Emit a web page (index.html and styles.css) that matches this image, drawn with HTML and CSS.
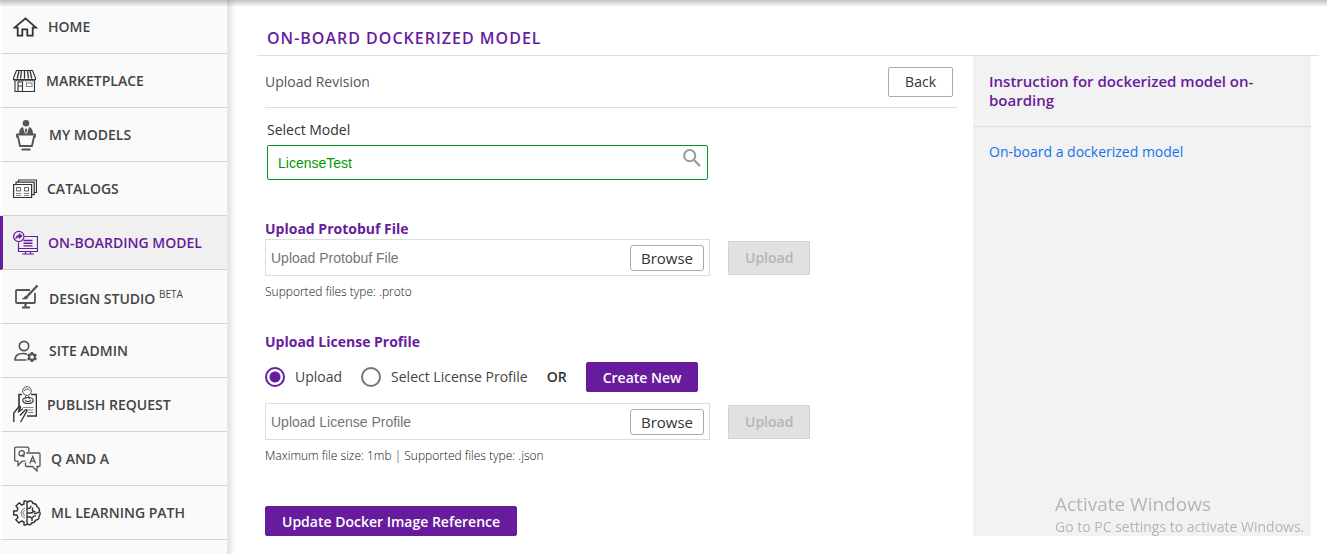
FILE: index.html
```html
<!DOCTYPE html>
<html lang="en">
<head>
<meta charset="utf-8">
<title>On-Board Dockerized Model</title>
<meta name="viewport" content="width=device-width, initial-scale=1">
<link rel="stylesheet" href="styles.css">
</head>
<body>
<div class="top-shade"></div>
<div class="layout">
  <nav class="sidebar" aria-label="Main">
    <a class="nav-item" href="#">
      <svg class="icon" width="25" height="20" viewBox="0 0 25 20" fill="none" stroke="#333" stroke-width="1.8"><path d="M1.5 10.6h3.2v8h4.600v-6.300h5v6.300h5.400v-8h3.200L12.500 1.400z"/></svg>
      <span>HOME</span>
    </a>
    <a class="nav-item" href="#">
      <svg class="icon" width="23" height="24" viewBox="0 0 23 24" fill="none" stroke="#333" stroke-width="1.1"><path d="M3.5 1.5h16l3 7.5v1.5H.5V9z"/><path d="M6 2L4.200 9.500M8.500 2L7.500 9.500M11.500 2v7.500M14.500 2l1 7.500M17 2l1.800 7.500" stroke-width="1.300"/><path d="M.6 10.500q1.800 3 3.600 0q1.800 3 3.600 0q1.800 3 3.700 0q1.800 3 3.600 0q1.800 3 3.700 0q1.800 3 3.600 0"/><path d="M2 12v10.500h19.500V12M5 22v-9h4.500v9M5 17h4.500"/><path d="M13.500 14h5.500v3.500h-5.500z" stroke="#888"/></svg>
      <span>MARKETPLACE</span>
    </a>
    <a class="nav-item" href="#">
      <svg class="icon" width="26" height="32" viewBox="0 0 26 32"><g fill="#555"><circle cx="13" cy="4.200" r="3.300"/><path d="M6 15q0-6 4-7l2 7zM20 15q0-6-4-7l-2 7zM13 9l1.300 2-1.300 4-1.300-4z"/><path d="M8.500 29.500h9v2h-9z"/></g><path d="M4 15.500h18v2.300h-1L19 27H7L5 17.800H4z" fill="none" stroke="#555" stroke-width="1.900" stroke-linejoin="round"/></svg>
      <span>MY MODELS</span>
    </a>
    <a class="nav-item" href="#">
      <svg class="icon" width="24" height="20" viewBox="0 0 24 20" fill="none" stroke="#333" stroke-width="1.200"><path d="M.6 5.500h18v13H.6zM3 5.300V3.200h18.200v12.500h-2.400M5.500 3V1h18v12.500h-2"/><path d="M3.500 8.500h4v3.500h-4zM11.500 8.500h4v3.500h-4z" stroke="#666" stroke-width="1"/><path d="M3 14.500h5M3 16.500h5M11 14.500h5M11 16.500h5" stroke="#888" stroke-width="1"/></svg>
      <span>CATALOGS</span>
    </a>
    <a class="nav-item nav-item--active" href="#" aria-current="page">
      <svg class="icon" width="25" height="26" viewBox="0 0 25 26" fill="none" stroke="#671c9d" stroke-width="1.200"><circle cx="5.800" cy="6.500" r="5.200"/><path d="M2.500 9q.3-3.500 3.500-3.800V3.500L9.500 6 6 8.500V7Q4 7.200 2.500 9z" fill="#671c9d" stroke-width=".5"/><path d="M11.500 6.500h13v15H5.500v-9M5.500 18.500h19M12.500 21.500v2.500M17.500 21.500v2.500M9 24h12"/><path d="M10.500 10.500h9M10.500 13.200h9M10.500 15.900h9" stroke-width="1.400"/></svg>
      <span>ON-BOARDING MODEL</span>
    </a>
    <a class="nav-item" href="#">
      <svg class="icon" width="26" height="25" viewBox="0 0 26 25" fill="none" stroke="#555" stroke-width="1.800"><path d="M17 6H4q-1 0-1 1v11q0 1 1 1h17q1 0 1-1V9"/><path d="M9 14.800q2.300-.2 2.800-2.300 1.700-1.700 3.200 0 .3 3.500-6 2.300z" fill="#555" stroke-width=".5"/><path d="M14.500 12L24.500 1.500" stroke-width="2.400"/><path d="M12.500 19v4M9 23.500h8" stroke-width="2.200"/></svg>
      <span>DESIGN STUDIO <sup>BETA</sup></span>
    </a>
    <a class="nav-item" href="#">
      <svg class="icon" width="26" height="22" viewBox="0 0 26 22" fill="none" stroke="#555" stroke-width="1.700"><circle cx="11" cy="6" r="4.700"/><path d="M13.500 20H2q0-6.500 8-6.500 2.300 0 4 .6"/><circle cx="19" cy="17" r="2.900" stroke-width="2.100"/><path d="M19 12v2M19 20v2M14.600 14.500l1.700 1M21.700 18.500l1.700 1M14.600 19.500l1.700-1M21.700 15.500l1.700-1" stroke-width="2.300"/></svg>
      <span>SITE ADMIN</span>
    </a>
    <a class="nav-item" href="#">
      <svg class="icon" width="24" height="37" viewBox="0 0 24 37" fill="none" stroke="#333" stroke-width="1.200"><path d="M9 8.500H6v15M18 8.500h5.500V30H14" stroke-width="1.600"/><g stroke="#555" stroke-width="1"><circle cx="14" cy="5" r="4.300"/><path d="M11.500 5q0-2 2.500-2 2 0 2.500 1.500"/><path d="M12.500 9.500q.5 2.300-1 3.800M15.800 9.500q-.5 2.300 1 3.800"/></g><ellipse cx="15" cy="14.500" rx="5.200" ry="3"/><path d="M12 14.500q3 2 6 0"/><path d="M10 21.500h10.500M13 24h7.500M15 26.500h5.500" stroke="#888"/><path d="M.8 36V27L6 20.500q1.600-1 1.500 1L5 26.500M7.500 36l3-5 3.300-6q.2-2-1.600-1L7 29.500M6 25.500l4-2.800" stroke-width="1.400"/></svg>
      <span>PUBLISH REQUEST</span>
    </a>
    <a class="nav-item" href="#">
      <svg class="icon" width="28" height="26" viewBox="0 0 28 26" fill="none" stroke="#555" stroke-width="1.300"><path d="M12.500 15.200H9L5 19.500v-4.300H3q-1.300 0-1.300-1.300V2.500Q1.700 1.200 3 1.200h11.500q1.300 0 1.300 1.300V6"/><path d="M13.200 7H26q1 0 1 1v11.500q0 1-1 1h-2V25l-4.500-4.500h-6q-1 0-1-1v-3"/><circle cx="8.700" cy="7.300" r="2.700"/><path d="M9.200 8.500l2 2.300M16.800 17.500l2.900-7 2.900 7M17.800 15.200h3.800"/></svg>
      <span>Q AND A</span>
    </a>
    <a class="nav-item" href="#">
      <svg class="icon" width="28" height="26" viewBox="0 0 28 26" fill="none" stroke="#333" stroke-width="1.400" stroke-linejoin="round"><path d="M13.500 1H11v3L8.500 5 6.300 2.800 3 6l2 2.500L4 11H.7v4H4l1 2.500-2.200 2.300L6 23l2.500-2 2.500 1v3h2.500"/><path d="M14 1v24M14 3q1-2.300 3.500-2 2.200.2 2.300 2.500 3.700-.5 4.200 3.200 3.300 1.800 2.200 4.500 2 2.800-.2 5 .3 3.600-3.500 4-1 3-3.700 2.500-.8 2.300-3 2-1.600-.2-1.800-2"/><path d="M14 8.500q4 .5 4-2.800M20 7.500q-2 3.500 2.500 4.500M14 13h3.500q2.500 0 3-2M26 12q-2.500 2-5 1.500M14 17.500q3-2 5 1v2.500M19.500 18q.3-2.500 3.500-2"/><path d="M12 8q-4 1-4 5t4 5M12 10.500q-2 .5-2 2.500t2 2.500" stroke="#777" stroke-width="1"/></svg>
      <span>ML LEARNING PATH</span>
    </a>
  </nav>

  <main class="main">
    <h1 class="page-title">ON-BOARD DOCKERIZED MODEL</h1>
    <div class="columns">
      <section class="form-column">
        <div class="revision-bar">
          <h2 class="revision-title">Upload Revision</h2>
          <button class="btn btn--outline" type="button">Back</button>
        </div>

        <form class="form">
          <div class="model-field">
            <label class="model-label" for="model">Select Model</label>
            <div class="search-box">
              <input class="search-input" id="model" type="text" value="LicenseTest">
              <svg class="search-icon" width="18" height="18" viewBox="0 0 18 18" fill="none" stroke="#999" stroke-width="2"><circle cx="6.700" cy="6.700" r="5.600"/><path d="M10.800 10.800l6.200 6.200" stroke-width="2.200"/></svg>
            </div>
          </div>

          <div class="upload-group">
            <label class="group-title" for="protobuf">Upload Protobuf File</label>
            <div class="upload-row">
              <div class="file-box">
                <input class="file-input" id="protobuf" type="text" placeholder="Upload Protobuf File">
                <button class="btn btn--browse" type="button">Browse</button>
              </div>
              <button class="btn btn--disabled" type="button" disabled>Upload</button>
            </div>
            <p class="hint">Supported files type: .proto</p>
          </div>

          <div class="upload-group upload-group--license">
            <label class="group-title" for="license">Upload License Profile</label>
            <div class="choices">
              <label class="choice"><input class="radio" type="radio" name="source" checked>Upload</label>
              <label class="choice"><input class="radio" type="radio" name="source">Select License Profile</label>
              <strong class="or">OR</strong>
              <button class="btn btn--primary" type="button">Create New</button>
            </div>
            <div class="upload-row">
              <div class="file-box">
                <input class="file-input" id="license" type="text" placeholder="Upload License Profile">
                <button class="btn btn--browse" type="button">Browse</button>
              </div>
              <button class="btn btn--disabled" type="button" disabled>Upload</button>
            </div>
            <p class="hint">Maximum file size: 1mb | Supported files type: .json</p>
          </div>

          <button class="btn btn--primary btn--submit" type="button">Update Docker Image Reference</button>
        </form>
      </section>

      <aside class="help">
        <h2 class="help-title">Instruction for dockerized model on-boarding</h2>
        <a class="help-link" href="#">On-board a dockerized model</a>
      </aside>
    </div>
  </main>
</div>
<div class="watermark">
  <p class="watermark-title">Activate Windows</p>
  <p class="watermark-text">Go to PC settings to activate Windows.</p>
</div>
</body>
</html>
```
FILE: styles.css
```css
* {
  box-sizing: border-box;
}

body {
  margin: 0;
  background: #fff;
  color: #333;
  font-family: "Open Sans", "Noto Sans", sans-serif;
  font-size: 14px;
  line-height: 20px;
  overflow: hidden;
}

h1, h2, p {
  margin: 0;
}

button, input {
  font-family: inherit;
  font-size: 14px;
}

.top-shade {
  position: fixed;
  inset: 0 0 auto;
  z-index: 1;
  height: 7px;
  background: linear-gradient(rgba(0, 0, 0, 0.24), rgba(0, 0, 0, 0));
}

.layout {
  display: grid;
  grid-template-columns: 227px minmax(0, 1fr);
  min-height: 100vh;
}

.sidebar {
  background: #fafafa;
  box-shadow: 3px 0 0 #e6e6e6, 4px 0 6px rgba(0, 0, 0, 0.14);
}

.nav-item {
  display: flex;
  align-items: center;
  gap: 10px;
  height: 54px;
  padding-left: 10px;
  border-left: 3px solid #fff;
  border-bottom: 1px solid #d2d2d2;
  color: #444;
  font-weight: 600;
  text-decoration: none;
  white-space: nowrap;
}

.nav-item--active {
  border-left-color: #671c9d;
  background: #f0f0f0;
  color: #671c9d;
}

.nav-item sup {
  font-size: 10px;
  font-weight: 400;
}

.icon {
  flex: none;
}

.main {
  padding: 0 8px 0 30px;
}

.page-title {
  padding: 26px 10px 5px;
  border-bottom: 1px solid #ddd;
  color: #671c9d;
  font-size: 16px;
  font-weight: 600;
  line-height: 24px;
  letter-spacing: 1px;
}

.columns {
  display: grid;
  grid-template-columns: minmax(0, 692fr) minmax(0, 338fr);
  gap: 16px;
  padding: 0 8px;
}

.revision-bar {
  display: flex;
  align-items: center;
  justify-content: space-between;
  height: 52px;
  padding-right: 4px;
  border-bottom: 1px solid #ddd;
}

.revision-title {
  color: #555;
  font-size: 14px;
  font-weight: 400;
}

.btn {
  height: 30px;
  padding: 0 16px;
  border: 1px solid #aaa;
  border-radius: 2px;
  background: #fff;
  color: #333;
  font-weight: 500;
  white-space: nowrap;
}

.form {
  padding-top: 12px;
}

.model-field {
  width: 441px;
  max-width: 100%;
  margin: 0 0 39px 2px;
}

.model-label {
  display: block;
  margin-bottom: 5px;
}

.search-box {
  display: flex;
  height: 35px;
  padding: 3px 6px 3px 10px;
  border: 1px solid #0a9216;
  border-radius: 2px;
}

.search-input,
.file-input {
  flex: 1;
  min-width: 0;
  padding: 0;
  border: 0;
  outline: 0;
  background: none;
  font-family: "Liberation Sans", Arial, sans-serif;
}

.search-input {
  color: #009a00;
}

.upload-group {
  margin-bottom: 30px;
}

.upload-group--license {
  margin-bottom: 40px;
}

.group-title {
  display: block;
  color: #671c9d;
  font-weight: 700;
}

.upload-row {
  display: flex;
  align-items: center;
  gap: 18px;
}

.file-box {
  display: flex;
  align-items: center;
  width: 445px;
  height: 37px;
  padding: 0 5px;
  border: 1px solid #ddd;
}

.file-input::placeholder {
  color: #757575;
  opacity: 1;
}

.btn--browse {
  height: 26px;
  padding: 0 10px;
  border-radius: 3px;
  font-size: 15px;
}

.btn--disabled {
  height: 34px;
  border-color: #d3d3d3;
  border-radius: 0;
  background: #e2e0e1;
  color: #b5b5b5;
  font-weight: 600;
}

.btn--primary {
  border-color: #671c9d;
  background: #671c9d;
  color: #fff;
  font-weight: 600;
}

.hint {
  padding-top: 6px;
  color: #111;
  font-size: 12px;
  font-weight: 300;
}

.choices {
  display: flex;
  align-items: center;
  gap: 19px;
  padding: 10px 0 11px;
}

.choice {
  display: flex;
  align-items: center;
  gap: 10px;
  color: #444;
}

.radio {
  appearance: none;
  width: 20px;
  height: 20px;
  margin: 0;
  border: 2px solid #757575;
  border-radius: 50%;
}

.radio:checked {
  border-color: #671c9d;
  background: radial-gradient(circle, #671c9d 5px, transparent 6px);
}

.or {
  font-weight: 600;
}

.help {
  min-height: 480px;
  background: #f2f2f2;
}

.help-title {
  padding: 16px;
  border-bottom: 1px solid #ddd;
  color: #671c9d;
  font-size: 15px;
  font-weight: 600;
  line-height: 19px;
}

.help-link {
  display: block;
  padding: 15px 16px;
  color: #1273eb;
  text-decoration: none;
}

.watermark {
  position: fixed;
  right: 16px;
  bottom: 17px;
  width: 256px;
  color: #b5b5b5;
  font-size: 14px;
  white-space: nowrap;
  pointer-events: none;
}

.watermark-title {
  font-size: 19px;
  line-height: 25px;
}
```
